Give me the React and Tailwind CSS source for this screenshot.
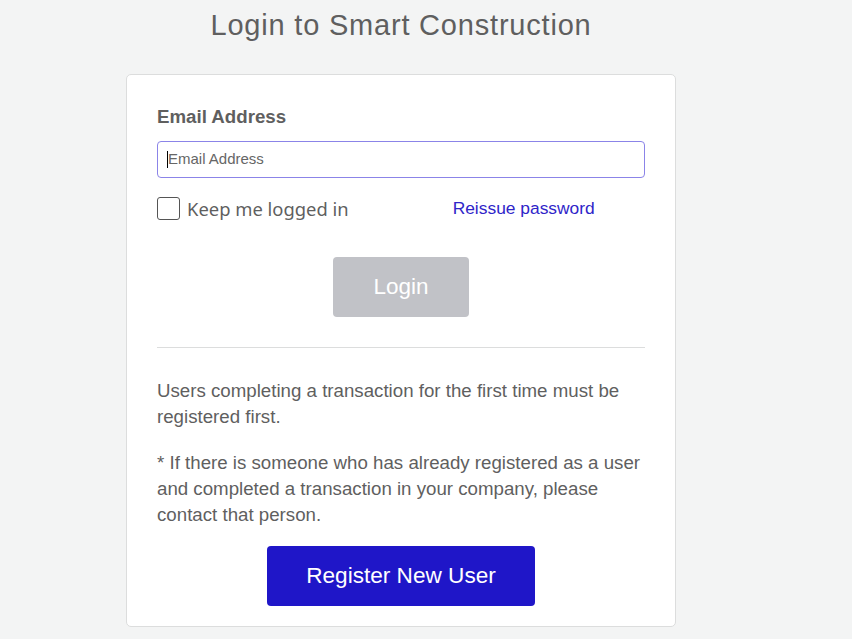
import React from "react";

export default function App() {
  return (
    <div className="min-h-[639px] w-[852px] bg-[#f3f4f4] font-['Liberation_Sans',Arial,sans-serif] text-[#5f5f5f]">
      <div className="w-[550px] ml-[126px] pt-[8px]">
        <h1 className="text-center text-[29px] leading-[35px] tracking-[0.8px] text-[#5f5f5f]">
          Login to Smart Construction
        </h1>
        <div className="mt-[31px] bg-white border border-[#dcdddd] rounded-[5px] px-[30px] pt-[31px] pb-[20px]">
          <label className="block text-[18.7px] leading-[22px] font-bold text-[#5f5f5f]">Email Address</label>
          <div className="mt-[13px] h-[37px] border border-[#8b84e8] rounded-[4px] flex items-center px-[9px]">
            <span className="w-[1px] h-[17px] bg-black"></span>
            <span className="text-[15px] text-[#666]">Email Address</span>
          </div>
          <div className="mt-[18px] flex items-center h-[24px]">
            <span className="w-[23px] h-[23px] border border-[#555] rounded-[3px] bg-white"></span>
            <span className="ml-[7px] mt-[2px] text-[18.4px] font-['Noto_Sans',sans-serif] text-[#5f5f5f]">Keep me logged in</span>
            <a className="ml-[104px] text-[17.4px] text-[#2f25c9]">Reissue password</a>
          </div>
          <div className="mt-[37px] flex justify-center">
            <button className="w-[136px] h-[60px] rounded-[4px] bg-[#c1c2c7] text-white text-[22.5px]">Login</button>
          </div>
          <div className="mt-[30px] border-t border-[#dcdddd]"></div>
          <p className="mt-[30px] text-[18.7px] leading-[26px]">
            Users completing a transaction for the first time must be registered first.
          </p>
          <p className="mt-[20px] text-[18.7px] leading-[26px]">
            * If there is someone who has already registered as a user and completed a transaction in your company, please contact that person.
          </p>
          <div className="mt-[18px] flex justify-center">
            <button className="w-[268px] h-[60px] rounded-[4px] bg-[#1f16c8] text-white text-[22.6px]">Register New User</button>
          </div>
        </div>
      </div>
    </div>
  );
}
